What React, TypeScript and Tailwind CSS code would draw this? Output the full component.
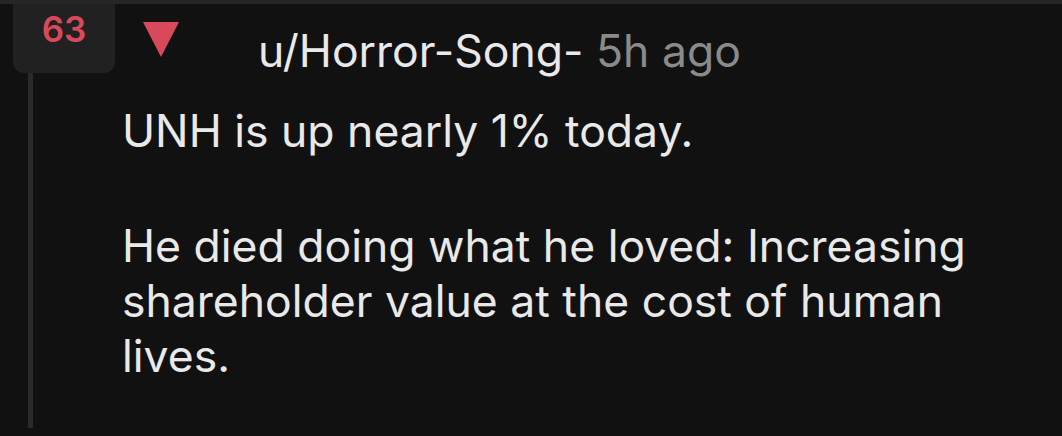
import React from "react";

const COMMENT = {
  score: 63,
  author: "u/Horror-Song-",
  age: "5h ago",
  lines: [
    ["UNH is up nearly 1% today."],
    ["He died doing what he loved: Increasing", "shareholder value at the cost of human", "lives."],
  ],
};

export default function App() {
  return (
    <div
      className="w-full h-[436px] bg-[#111111] border-t-4 border-[#262626] overflow-hidden text-[#e9e9e9]"
      style={{ fontFamily: "Inter, 'Noto Sans', sans-serif" }}
    >
      <div className="flex h-full pl-[13px]">
        {/* Score column */}
        <div className="w-[102px] flex flex-col">
          <div className="h-[69px] bg-[#212121] rounded-b-[11px] flex justify-center pt-[8px]">
            <span className="text-[35px] leading-[35px] font-semibold text-[#d8495b]">
              {COMMENT.score}
            </span>
          </div>
          <div className="w-[5px] ml-[15px] h-[355px] bg-[#2a2a2a]" />
        </div>

        {/* Comment */}
        <div className="flex-1 pl-[7px]">
          <div className="flex items-start h-[100px]">
            <svg width="36" height="36" viewBox="0 0 36 36" className="ml-[21px] mt-[18px]">
              <polygon points="0,0 36,0 18,35" fill="#d8495b" />
            </svg>
            <div className="ml-[79px] mt-[20px] text-[44.5px] leading-[55px] whitespace-nowrap">
              <span>{COMMENT.author}</span>{" "}
              <span className="text-[#8a8a8a]">{COMMENT.age}</span>
            </div>
          </div>
          <div className="text-[44.5px] leading-[55px] whitespace-nowrap">
            {COMMENT.lines.map((para, i) => (
              <p key={i} className={i > 0 ? "mt-[60px]" : ""}>
                {para.map((line) => (
                  <span key={line} className="block">
                    {line}
                  </span>
                ))}
              </p>
            ))}
          </div>
        </div>
      </div>
    </div>
  );
}
